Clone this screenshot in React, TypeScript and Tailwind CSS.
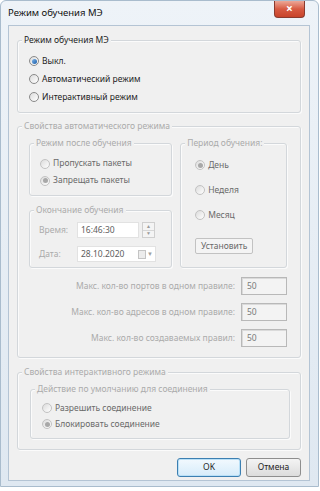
import React from 'react'

function Radio({ label, checked = false, disabled = false }: { label: string; checked?: boolean; disabled?: boolean }) {
  return (
    <div className="flex items-center gap-[3px] h-full">
      <span
        className={`w-[10px] h-[10px] rounded-full border flex items-center justify-center bg-gradient-to-br from-[#dcdcdc] to-white ${
          disabled ? 'border-[#c2c2c2]' : 'border-[#8a8a8a]'
        }`}
      >
        {checked && (
          <span
            className={`w-[5px] h-[5px] rounded-full ${
              disabled ? 'bg-[#a8a8a8]' : 'bg-gradient-to-br from-[#7ab4ea] to-[#1c5fa8]'
            }`}
          />
        )}
      </span>
      <span className={disabled ? 'text-[#6a6a6a]' : 'text-[#1e1e1e]'}>{label}</span>
    </div>
  )
}

function Group({
  legend,
  disabled = false,
  className = '',
  children,
}: {
  legend: string
  disabled?: boolean
  className?: string
  children?: React.ReactNode
}) {
  return (
    <div className={`relative border border-[#d3d7db] rounded-[3px] shadow-[inset_1px_1px_0_#fbfbfb,1px_1px_0_#fbfbfb] ${className}`}>
      <span
        className={`absolute -top-[7px] left-[4px] px-[2px] bg-[#f0f0f0] leading-[12px] ${
          disabled ? 'text-[#ababab]' : 'text-[#1e1e1e]'
        }`}
      >
        {legend}
      </span>
      {children}
    </div>
  )
}

function MaxRow({ label }: { label: string }) {
  return (
    <div className="flex items-center justify-end gap-[6px] h-[18px]">
      <span className="text-[#ababab]">{label}</span>
      <div className="w-[46px] h-[18px] border border-[#b8b8b8] bg-[#f3f3f3] shadow-[inset_1px_1px_0_#dadada] flex items-center pl-[5px] text-[#7a7a7a]">
        50
      </div>
    </div>
  )
}

export default function App() {
  return (
    <div className="w-[320px] h-[491px] bg-white overflow-hidden font-['Noto_Sans','Open_Sans',sans-serif] text-[8.5px]">
      {/* Window */}
      <div className="w-[319px] h-[487px] border border-[#a9bccd] rounded-t-[6px] bg-gradient-to-b from-[#eef3f8] to-[#dfe8f1] flex flex-col">
        {/* Title bar */}
        <div className="h-[24px] flex justify-between pl-[7px] pr-[13px]">
          <span className="self-center text-[9.5px] text-[#111]">Режим обучения МЭ</span>
          <div className="w-[31px] h-[17px] rounded-b-[4px] border border-[#8a3a2e] border-t-0 bg-gradient-to-b from-[#eba797] via-[#d75a42] to-[#c8432a] flex items-center justify-center text-white text-[12px] font-bold leading-none">
            ×
          </div>
        </div>

        {/* Client area */}
        <div className="ml-[7px] w-[302px] h-[456px] bg-[#f0f0f0] border border-[#b4c4d4] px-[8px] pt-[14px] flex flex-col">
          {/* Режим обучения */}
          <Group legend="Режим обучения МЭ" className="h-[73px] pt-[11px] pl-[11px]">
            <div className="h-[18px]"><Radio label="Выкл." checked /></div>
            <div className="h-[18px]"><Radio label="Автоматический режим" /></div>
            <div className="h-[18px]"><Radio label="Интерактивный режим" /></div>
          </Group>

          {/* Свойства автоматического режима */}
          <Group legend="Свойства автоматического режима" disabled className="mt-[13px] h-[232px] pt-[16px] pl-[11px] pr-[13px]">
            <div className="flex gap-[8px]">
              <div className="w-[145px] flex flex-col gap-[14px]">
                <Group legend="Режим после обучения" disabled className="h-[53px] pt-[11px] pl-[10px]">
                  <div className="h-[17px]"><Radio label="Пропускать пакеты" disabled /></div>
                  <div className="h-[17px]"><Radio label="Запрещать пакеты" checked disabled /></div>
                </Group>
                <Group legend="Окончание обучения" disabled className="h-[58px] pt-[11px] pl-[9px] flex flex-col gap-[8px]">
                  <div className="flex items-center h-[16px]">
                    <span className="w-[38px] text-[#ababab]">Время:</span>
                    <div className="w-[62px] h-[16px] bg-white border border-[#e2e2e2] flex items-center pl-[3px] text-[#5e5e5e]">
                      16:46:30
                    </div>
                    <div className="ml-[3px] w-[13px] h-[16px] border border-[#cfcfcf] bg-[#f4f4f4] flex flex-col">
                      <div className="flex-1 border-b border-[#d6d6d6] flex items-center justify-center text-[5px] text-[#9a9a9a] leading-none">▲</div>
                      <div className="flex-1 flex items-center justify-center text-[5px] text-[#9a9a9a] leading-none">▼</div>
                    </div>
                  </div>
                  <div className="flex items-center h-[16px]">
                    <span className="w-[38px] text-[#ababab]">Дата:</span>
                    <div className="w-[79px] h-[16px] bg-white border border-[#e2e2e2] flex items-center pl-[3px] pr-[2px] text-[#5e5e5e]">
                      <span className="flex-1">28.10.2020</span>
                      <span className="w-[8px] h-[9px] border border-[#c4c4c4] bg-[#ececec]" />
                      <span className="ml-[1px] text-[6px] text-[#a0a0a0] leading-none">▼</span>
                    </div>
                  </div>
                </Group>
              </div>
              <Group legend="Период обучения:" disabled className="w-[108px] h-[125px] pt-[12px] pl-[14px] flex flex-col">
                <div className="h-[18px]"><Radio label="День" checked disabled /></div>
                <div className="h-[18px] mt-[7px]"><Radio label="Неделя" disabled /></div>
                <div className="h-[18px] mt-[7px]"><Radio label="Месяц" disabled /></div>
                <div className="mt-[14px] w-[58px] h-[16px] border border-[#c2c2c2] rounded-[2px] bg-[#f4f4f4] flex items-center justify-center text-[#6a6a6a]">
                  Установить
                </div>
              </Group>
            </div>
            <div className="mt-[9px] flex flex-col gap-[8px]">
              <MaxRow label="Макс. кол-во портов в одном правиле:" />
              <MaxRow label="Макс. кол-во адресов в одном правиле:" />
              <MaxRow label="Макс. кол-во создаваемых правил:" />
            </div>
          </Group>

          {/* Свойства интерактивного режима */}
          <Group legend="Свойства интерактивного режима" disabled className="mt-[14px] h-[78px] pt-[16px] pl-[12px]">
            <Group legend="Действие по умолчанию для соединения" disabled className="w-[260px] h-[50px] pt-[10px] pl-[11px]">
              <div className="h-[16px]"><Radio label="Разрешить соединение" disabled /></div>
              <div className="h-[16px]"><Radio label="Блокировать соединение" checked disabled /></div>
            </Group>
          </Group>

          {/* Buttons */}
          <div className="mt-[8px] flex justify-end gap-[5px]">
            <button className="w-[64px] h-[19px] rounded-[3px] border border-[#3c7fb1] bg-gradient-to-b from-[#f2f9fe] to-[#d6ecfa] shadow-[inset_0_0_0_1px_#b9e0f7] text-[#1e1e1e] text-[8.5px]">
              OK
            </button>
            <button className="w-[55px] h-[19px] rounded-[3px] border border-[#8e8e8e] bg-gradient-to-b from-[#f4f4f4] to-[#dcdcdc] text-[#1e1e1e] text-[8.5px]">
              Отмена
            </button>
          </div>
        </div>
      </div>
    </div>
  )
}
